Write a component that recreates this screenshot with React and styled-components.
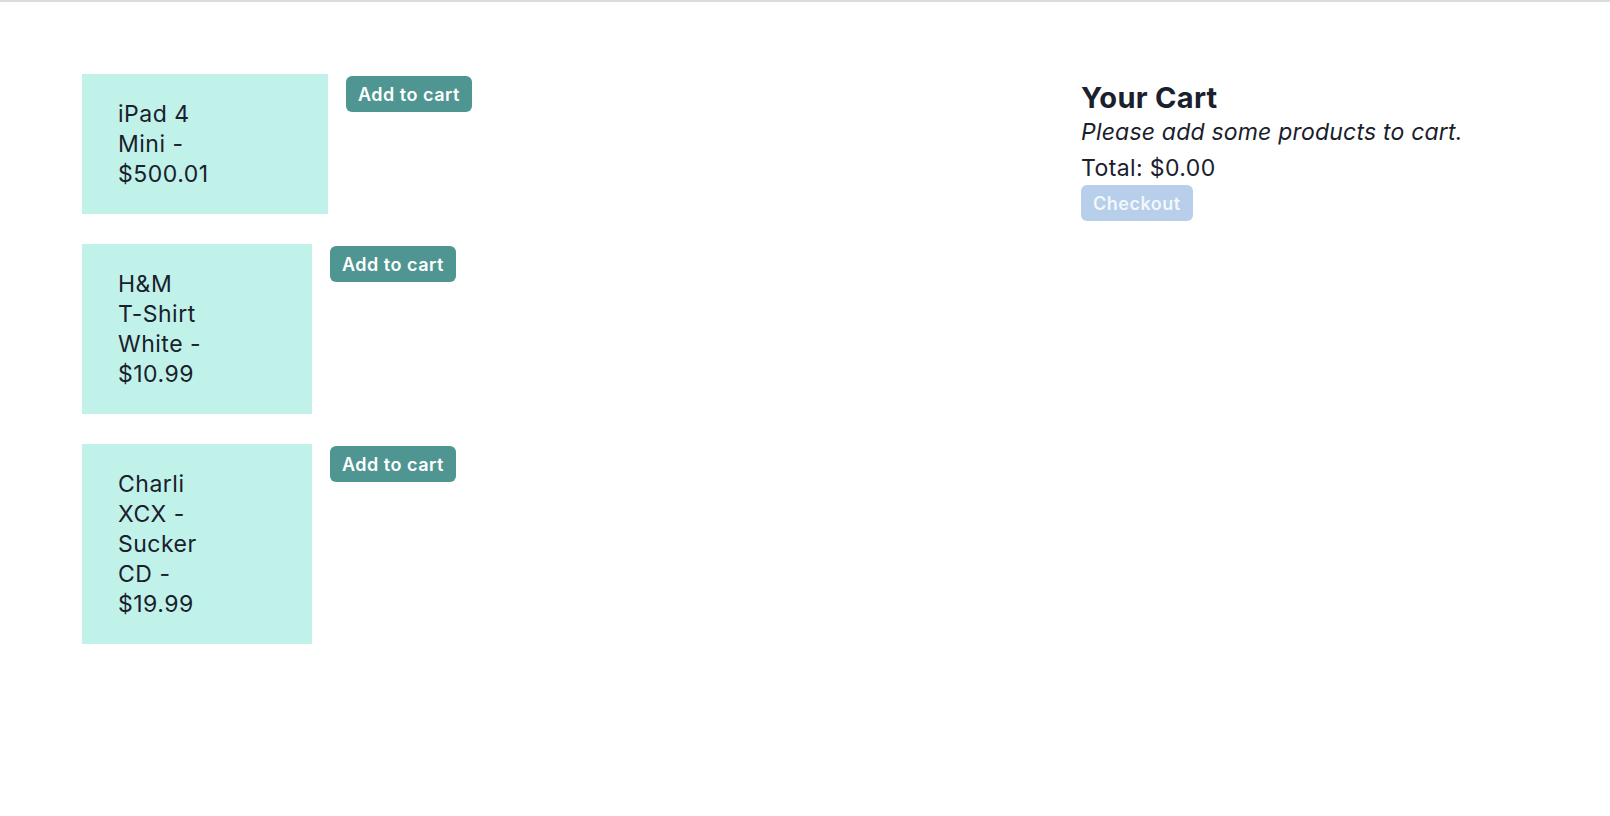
import React from 'react'
import styled, { createGlobalStyle } from 'styled-components'

const GlobalStyle = createGlobalStyle`
  html, body {
    margin: 0;
    padding: 0;
    background: #fff;
  }
  body {
    font-family: Inter, "Noto Sans", sans-serif;
    color: #1a202c;
    border-top: 2px solid #dcdce0;
  }
`

const products = [
  { id: 1, title: 'iPad 4 Mini', price: 500.01, width: 246 },
  { id: 2, title: 'H&M T-Shirt White', price: 10.99, width: 230 },
  { id: 3, title: 'Charli XCX - Sucker CD', price: 19.99, width: 230 },
]

const App = () => {
  return (
    <>
      <GlobalStyle />
      <Page>
        <ProductList>
          {products.map(p => {
            const words = `${p.title} - $${p.price.toFixed(2)}`.split(' ')
            return (
              <ProductRow key={p.id}>
                <ProductCard width={p.width}>
                  <ProductText>
                    {words.map((w, i) => (
                      <React.Fragment key={i}>
                        <Word>{w}</Word>{i < words.length - 1 ? ' ' : ''}
                      </React.Fragment>
                    ))}
                  </ProductText>
                </ProductCard>
                <AddButton>Add to cart</AddButton>
              </ProductRow>
            )
          })}
        </ProductList>
        <Cart>
          <CartTitle>Your Cart</CartTitle>
          <EmptyNote>Please add some products to cart.</EmptyNote>
          <Total>Total: $0.00</Total>
          <CheckoutButton disabled>Checkout</CheckoutButton>
        </Cart>
      </Page>
    </>
  )
}

export default App

const Page = styled.div`
  display: grid;
  grid-template-columns: 999px 1fr;
  padding: 72px 82px 0;
`
const ProductList = styled.div`
  display: flex;
  flex-direction: column;
  gap: 30px;
`
const ProductRow = styled.div`
  display: flex;
  align-items: flex-start;
  gap: 18px;
`
const ProductCard = styled.div`
  width: ${props => props.width}px;
  box-sizing: border-box;
  padding: 25px 36px;
  background: #c0f2ea;
`
const ProductText = styled.div`
  width: 106px;
  font-size: 23px;
  line-height: 30px;
  letter-spacing: 0.5px;
`
const Word = styled.span`
  white-space: nowrap;
`
const Button = styled.button`
  height: 36px;
  padding: 0 12px;
  border: none;
  border-radius: 6px;
  font-family: Inter, "Noto Sans", sans-serif;
  font-size: 18px;
  font-weight: 600;
  letter-spacing: 0.5px;
  color: #fff;
  cursor: pointer;
`
const AddButton = styled(Button)`
  margin-top: 2px;
  background: #4f9692;
`
const Cart = styled.div`
  padding-top: 5px;
  display: flex;
  flex-direction: column;
  align-items: flex-start;
`
const CartTitle = styled.h2`
  margin: 0;
  font-size: 29px;
  line-height: 38px;
  font-weight: 700;
  letter-spacing: 0.3px;
`
const EmptyNote = styled.p`
  margin: 0 0 6px;
  font-size: 23px;
  line-height: 30px;
  font-style: italic;
  letter-spacing: 0.2px;
`
const Total = styled.div`
  font-size: 23px;
  line-height: 30px;
  letter-spacing: 0.4px;
`
const CheckoutButton = styled(Button)`
  margin-top: 2px;
  background: #b7cfea;
  color: rgba(255, 255, 255, 0.85);
  cursor: not-allowed;
`
